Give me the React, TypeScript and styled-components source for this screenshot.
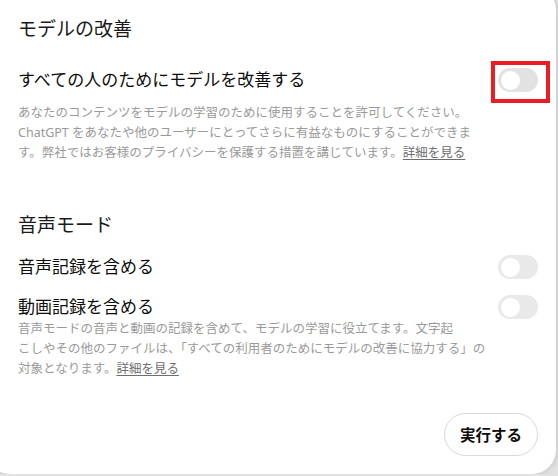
import React from 'react';
import styled, {createGlobalStyle} from 'styled-components';

const GlobalStyle = createGlobalStyle`
  html, body { margin: 0; padding: 0; }
  body {
    background: #e2e2e2;
    font-family: "Noto Sans", "Noto Sans CJK JP", sans-serif;
    overflow: hidden;
  }
`;

const Card = styled.div`
  box-sizing: border-box;
  width: 570px;
  height: 488px;
  margin: -14px 0 0 -14px;
  padding: 29px 18px 0 32px;
  background: #fff;
  border-radius: 24px;
  box-shadow: 0 0 6px rgba(0, 0, 0, 0.18);
  display: flex;
  flex-direction: column;
`;

const Heading = styled.h2<{ $top?: number }>`
  margin: ${p => p.$top || 0}px 0 0;
  font-size: 19px;
  line-height: 28px;
  font-weight: 400;
  color: #1a1a1a;
`;

const Row = styled.div<{ $top: number }>`
  margin-top: ${p => p.$top}px;
  height: 22px;
  display: flex;
  align-items: center;
  justify-content: space-between;
`;

const Label = styled.span`
  font-size: 17px;
  line-height: 22px;
  color: #0d0d0d;
`;

const Switch = styled.span<{ $tone?: string }>`
  flex: none;
  width: 40px;
  height: 24px;
  border-radius: 12px;
  background: ${p => p.$tone || '#e9e9e9'};
  display: flex;
  align-items: center;
  padding-left: 3px;
  box-sizing: border-box;
`;

const Knob = styled.span`
  width: 19px;
  height: 19px;
  border-radius: 50%;
  background: #fff;
`;

// red marker drawn round the first switch in the screenshot
const Marker = styled.span`
  display: flex;
  border: 4px solid #ec1c24;
  padding: 3px 8px 7px 3px;
  margin: -7px -12px -11px -7px;
`;

const Desc = styled.p<{ $top: number }>`
  margin: ${p => p.$top}px 0 0;
  font-size: 12.5px;
  line-height: 20px;
  color: #9a9a9a;
  white-space: nowrap;
`;

const More = styled.a`
  color: #6e6e6e;
  text-decoration: underline;
  text-underline-offset: 2px;
`;

const Footer = styled.div`
  margin-top: 34px;
  display: flex;
  justify-content: flex-end;
`;

const RunButton = styled.button`
  height: 43px;
  padding: 0 15px;
  border: 1px solid #d9d9d9;
  border-radius: 22px;
  background: #fff;
  font-family: "Noto Sans", "Noto Sans CJK JP", sans-serif;
  font-size: 15.5px;
  font-weight: 600;
  color: #0d0d0d;
`;

function Toggle({tone}: { tone?: string }) {
    return <Switch $tone={tone}><Knob/></Switch>;
}

export default function App() {
    return (
        <>
            <GlobalStyle/>
            <Card>
                <Heading>モデルの改善</Heading>
                <Row $top={26}>
                    <Label>すべての人のためにモデルを改善する</Label>
                    <Marker><Toggle tone="#e2e2e2"/></Marker>
                </Row>
                <Desc $top={12}>
                    あなたのコンテンツをモデルの学習のために使用することを許可してください。<br/>
                    ChatGPT をあなたや他のユーザーにとってさらに有益なものにすることができま<br/>
                    す。弊社ではお客様のプライバシーを保護する措置を講じています。<More>詳細を見る</More>
                </Desc>

                <Heading $top={48}>音声モード</Heading>
                <Row $top={17}>
                    <Label>音声記録を含める</Label>
                    <Toggle/>
                </Row>
                <Row $top={18}>
                    <Label>動画記録を含める</Label>
                    <Toggle/>
                </Row>
                <Desc $top={1}>
                    音声モードの音声と動画の記録を含めて、モデルの学習に役立てます。文字起<br/>
                    こしやその他のファイルは、「すべての利用者のためにモデルの改善に協力する」の<br/>
                    対象となります。<More>詳細を見る</More>
                </Desc>

                <Footer>
                    <RunButton>実行する</RunButton>
                </Footer>
            </Card>
        </>
    );
}
